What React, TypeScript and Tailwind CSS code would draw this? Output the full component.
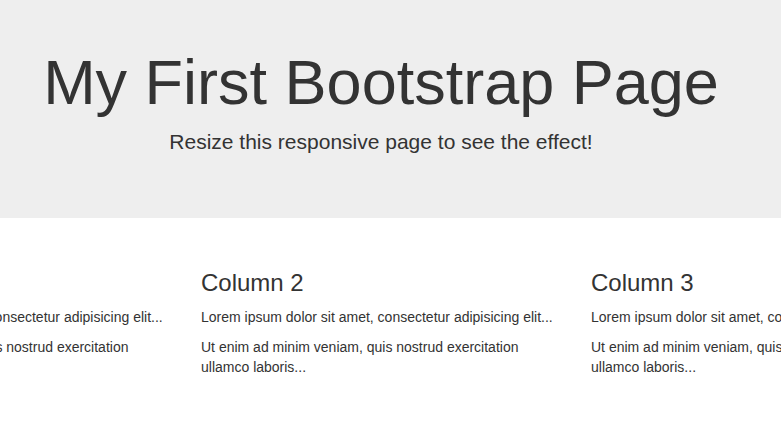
import React from 'react';

const columns = ['Column 1', 'Column 2', 'Column 3'];

export default function App() {
  return (
    <div className="min-h-screen w-full overflow-hidden bg-white text-[#333] font-['Liberation_Sans',Arial,sans-serif]">
      {/* Jumbotron */}
      <div className="bg-[#eeeeee] pt-[48px] pb-[46px] mb-[30px]">
        <div className="w-[1170px] ml-[-204px] px-[15px] text-center">
          <h1 className="text-[63px] leading-[1.1] mb-[10px]">My First Bootstrap Page</h1>
          <p className="text-[21px] leading-[1.4286] mb-[15px]">Resize this responsive page to see the effect!</p>
        </div>
      </div>

      {/* Row of columns */}
      <div className="w-[1170px] ml-[-204px] grid grid-cols-3">
        {columns.map((title) => (
          <div key={title} className="px-[15px]">
            <h3 className="text-[24px] leading-[1.1] mt-[22px] mb-[10px]">{title}</h3>
            <p className="text-[14px] leading-[20px] mb-[10px]">Lorem ipsum dolor sit amet, consectetur adipisicing elit...</p>
            <p className="text-[14px] leading-[20px] mb-[10px]">Ut enim ad minim veniam, quis nostrud exercitation ullamco laboris...</p>
          </div>
        ))}
      </div>
    </div>
  );
}
